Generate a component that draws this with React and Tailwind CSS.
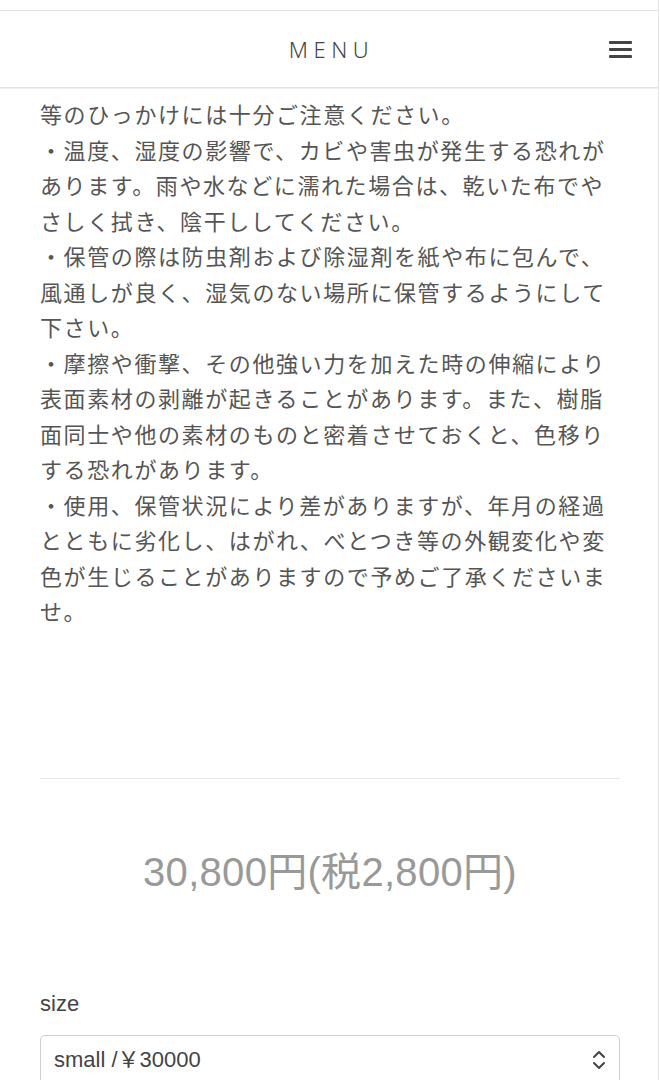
import React from "react";

const lines = [
  "等のひっかけには十分ご注意ください。",
  "・温度、湿度の影響で、カビや害虫が発生する恐れが",
  "あります。雨や水などに濡れた場合は、乾いた布でや",
  "さしく拭き、陰干ししてください。",
  "・保管の際は防虫剤および除湿剤を紙や布に包んで、",
  "風通しが良く、湿気のない場所に保管するようにして",
  "下さい。",
  "・摩擦や衝撃、その他強い力を加えた時の伸縮により",
  "表面素材の剥離が起きることがあります。また、樹脂",
  "面同士や他の素材のものと密着させておくと、色移り",
  "する恐れがあります。",
  "・使用、保管状況により差がありますが、年月の経過",
  "とともに劣化し、はがれ、べとつき等の外観変化や変",
  "色が生じることがありますので予めご了承くださいま",
  "せ。",
];

export default function App() {
  return (
    <div className="relative w-[660px] h-[1080px] overflow-hidden bg-white">
      <div className="absolute top-0 bottom-0 left-[658px] w-px bg-[#e4e4e4]" />
      {/* fixed header */}
      <header className="absolute left-0 top-[10px] w-[658px] h-[78px] bg-white border-t border-b border-[#e2e2e2] shadow-[0_1px_1px_rgba(0,0,0,0.06)] z-10 flex items-center justify-center">
        <span
          className="text-[22px] tracking-[5.5px] pl-[5px] text-[#444] font-light leading-none"
          style={{ fontFamily: '"Noto Sans", "Open Sans", sans-serif' }}
        >
          MENU
        </span>
        <div className="absolute right-[26px] top-[30px] flex flex-col gap-[4px]">
          <div className="w-[23px] h-[3px] rounded-[1px] bg-[#444]" />
          <div className="w-[23px] h-[3px] rounded-[1px] bg-[#444]" />
          <div className="w-[23px] h-[3px] rounded-[1px] bg-[#444]" />
        </div>
      </header>

      <main className="px-[40px] pt-[96px] w-[660px]">
        <div
          className="text-[22px] tracking-[1.6px] leading-[35.5px] text-[#555] whitespace-nowrap"
          style={{ fontFamily: '"Noto Sans CJK JP", "Noto Sans", sans-serif' }}
        >
          {lines.map((l, i) => (
            <div key={i}>{l}</div>
          ))}
        </div>

        <div className="mt-[149px] h-px w-[580px] bg-[#e6e6e6]" />

        <div
          className="mt-[69px] text-center text-[40px] leading-[48px] text-[#999] tracking-[0.3px]"
          style={{ fontFamily: '"Liberation Sans", "Noto Sans CJK JP", sans-serif' }}
        >
          30,800円(税2,800円)
        </div>

        <div
          className="mt-[93px] text-[22px] leading-[30px] text-[#444]"
          style={{ fontFamily: '"Liberation Sans", "Noto Sans CJK JP", sans-serif' }}
        >
          size
        </div>

        <div
          className="mt-[16px] w-[580px] h-[56px] rounded-[5px] border border-[#cfcfcf] flex items-start pt-[10px] pl-[13px] pr-[13px] justify-between text-[22px] leading-[28px] text-[#444]"
          style={{ fontFamily: '"Liberation Sans", "Noto Sans CJK JP", sans-serif' }}
        >
          <span>small /￥30000</span>
          <svg width="14" height="20" viewBox="0 0 14 20" className="mt-[4px]" fill="none" stroke="#444" strokeWidth="2" strokeLinecap="round" strokeLinejoin="round">
            <path d="M2 7 L7 2 L12 7" />
            <path d="M2 13 L7 18 L12 13" />
          </svg>
        </div>
      </main>
    </div>
  );
}
